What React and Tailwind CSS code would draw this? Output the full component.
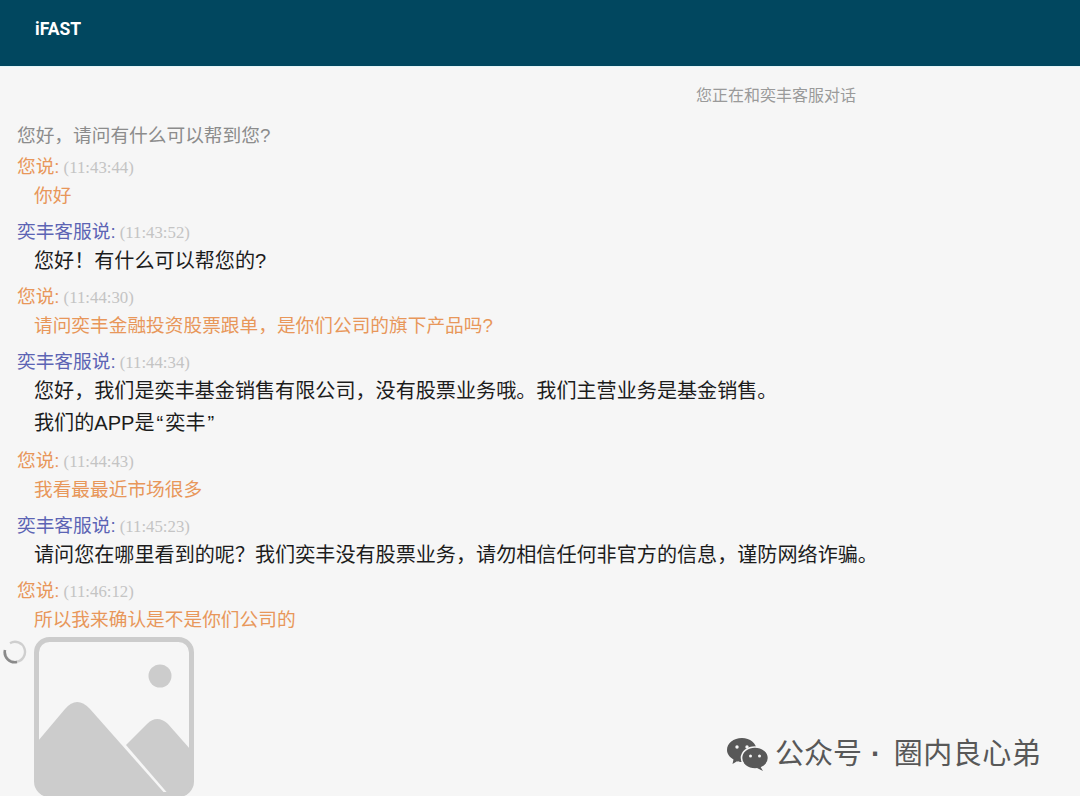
import React from "react";

const sans = "font-['Liberation_Sans','Noto_Sans_CJK_SC',sans-serif]";

const messages = [
  { who: "me", time: "11:43:44", lines: ["你好"] },
  { who: "staff", time: "11:43:52", lines: ["您好！有什么可以帮您的?"] },
  { who: "me", time: "11:44:30", lines: ["请问奕丰金融投资股票跟单，是你们公司的旗下产品吗?"] },
  {
    who: "staff",
    time: "11:44:34",
    lines: [
      "您好，我们是奕丰基金销售有限公司，没有股票业务哦。我们主营业务是基金销售。",
      <>
        我们的APP是<span className="px-[2px]">“</span>奕丰<span className="px-[2px]">”</span>
      </>,
    ],
  },
  { who: "me", time: "11:44:43", lines: ["我看最最近市场很多"] },
  { who: "staff", time: "11:45:23", lines: ["请问您在哪里看到的呢？我们奕丰没有股票业务，请勿相信任何非官方的信息，谨防网络诈骗。"] },
  { who: "me", time: "11:46:12", lines: ["所以我来确认是不是你们公司的"] },
];

function Message({ who, time, lines }) {
  const isMe = who === "me";
  return (
    <div className="mb-[7px]">
      <div className="h-[29px] flex items-center pl-[17px]">
        <span className={`text-[18.7px] ${isMe ? "text-[#e8975a]" : "text-[#5c64b4]"}`}>
          {isMe ? "您说:" : "奕丰客服说:"}
        </span>
        <span className="ml-[4px] text-[16.8px] text-[#c4c4c4] font-['Liberation_Serif',serif]">({time})</span>
      </div>
      {lines.map((line, i) => (
        <div
          key={i}
          className={`pl-[34px] whitespace-nowrap flex items-center ${i > 0 ? "h-[32px] mt-[2px]" : "h-[29px]"} ${
            isMe ? "text-[18.7px] text-[#e8975a]" : "text-[20.1px] text-[#1c1c1c] pb-[1px]"
          }`}
        >
          {line}
        </div>
      ))}
    </div>
  );
}

function ImagePlaceholder() {
  return (
    <svg width="160" height="160" viewBox="0 0 160 160" className="block shrink-0">
      <rect x="2.5" y="2.5" width="155" height="155" rx="13" fill="none" stroke="#cccccc" strokeWidth="5" />
      <circle cx="126" cy="39" r="11.5" fill="#cccccc" />
      <path d="M4 104 L31 72 Q43 58 56 72 L133 159 L14 159 Q4 159 4 148 Z" fill="#cccccc" />
      <path d="M92 108 L113 87 Q123 77 134 87 L156 112 L156 148 Q156 159 146 159 L136 159 Z" fill="#cccccc" />
    </svg>
  );
}

function Spinner() {
  return (
    <svg width="24" height="24" viewBox="0 0 24 24" className="block">
      <path d="M7 3.2 A10 10 0 1 1 2 12" fill="none" stroke="#cfcfcf" strokeWidth="2.4" />
      <path d="M2 10 A10 10 0 0 0 14 22" fill="none" stroke="#8a8a8a" strokeWidth="2.6" />
    </svg>
  );
}

function WechatIcon() {
  return (
    <svg width="41" height="33" viewBox="0 0 41 33">
      <path d="M15 0 C23 0 29.5 5 29.5 12 C29.5 19 23 24 15 24 C13 24 11.5 23.8 10 23.2 L5.5 26 L6.5 21.5 C2.5 19 0 16 0 12 C0 5 6.5 0 15 0 Z" fill="#585858" />
      <ellipse cx="28" cy="20" rx="13.5" ry="11" fill="#585858" stroke="#f6f6f6" strokeWidth="1.6" />
      <path d="M33 28 L36 33 L30 30 Z" fill="#585858" />
      <circle cx="10" cy="9" r="1.7" fill="#f6f6f6" />
      <circle cx="20" cy="9" r="1.7" fill="#f6f6f6" />
      <circle cx="23.5" cy="18" r="1.5" fill="#f6f6f6" />
      <circle cx="32.5" cy="18" r="1.5" fill="#f6f6f6" />
    </svg>
  );
}

export default function App() {
  return (
    <div className={`relative h-[796px] w-[1080px] overflow-hidden bg-[#f6f6f6] ${sans}`}>
      <div className="h-[66px] bg-[#01475f] flex items-center pl-[35px] pb-[7px]">
        <span className="text-white text-[17.5px] font-bold font-['Roboto',sans-serif]">iFAST</span>
      </div>
      <div className="h-px bg-[#e4f6f8]" />

      <div className="h-[55px] pt-[18px] pl-[696px] text-[16px] leading-[22px] text-[#9a9a9a]">
        您正在和奕丰客服对话
      </div>
      <div className="h-[28px] mb-[3px] pl-[17px] flex items-center text-[18.7px] text-[#8c8c8c]">
        您好，请问有什么可以帮到您?
      </div>

      {messages.map((m) => (
        <Message key={m.time} {...m} />
      ))}

      <div className="flex items-start mt-[-5px]">
        <div className="w-[34px] pl-[3px] pt-[3px]">
          <Spinner />
        </div>
        <ImagePlaceholder />
      </div>

      {/* watermark */}
      <div className="absolute left-[727px] top-[733px] flex items-center text-[29px] text-[#585858] whitespace-nowrap">
        <WechatIcon />
        <span className="ml-[7px]">公众号</span>
        <span className="ml-[9px] font-bold">·</span>
        <span className="ml-[13px] tracking-[0.5px]">圈内良心弟</span>
      </div>
    </div>
  );
}
